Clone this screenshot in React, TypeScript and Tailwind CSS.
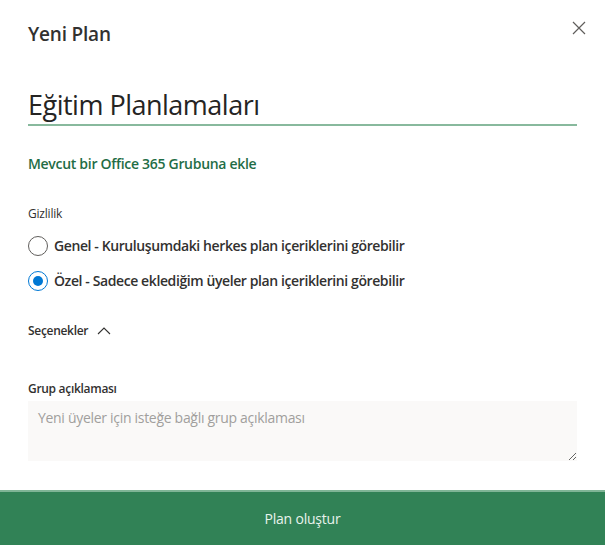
import { useState } from "react";

export default function App() {
  const [title, setTitle] = useState("Eğitim Planlamaları");
  const [privacy, setPrivacy] = useState("private");
  const [desc, setDesc] = useState("");

  return (
    <div
      className="relative flex h-[545px] w-[605px] flex-col bg-white text-[#323130]"
      style={{ fontFamily: '"Open Sans", "Noto Sans", sans-serif' }}
    >
      <div className="flex-1 px-7">
        <div className="flex items-start justify-between pt-[22px]">
          <h1 className="text-[19px] font-semibold leading-6 tracking-[-0.2px]">Yeni Plan</h1>
          <button className="mr-[-10px] mt-[-2px] text-[#605e5c]">
            <svg width="16" height="16" viewBox="0 0 16 16" fill="none" stroke="currentColor" strokeWidth="1.2">
              <path d="M2 2l12 12M14 2L2 14" />
            </svg>
          </button>
        </div>

        <input
          value={title}
          onChange={(e) => setTitle(e.target.value)}
          className="mt-[41px] w-full border-b-2 border-[#88b99d] pb-[1px] text-[27px] leading-9 tracking-[-0.5px] text-[#252423] outline-none"
        />

        <p className="mt-[27px] text-[14px] font-semibold tracking-[-0.3px] text-[#1f6d46]">
          Mevcut bir Office 365 Grubuna ekle
        </p>

        <p className="mt-[31px] text-[12px] tracking-[-0.2px] text-[#323130]">Gizlilik</p>

        <div className="mt-[12px] flex flex-col gap-[14px]">
          <Radio
            checked={privacy === "public"}
            onClick={() => setPrivacy("public")}
            label="Genel - Kuruluşumdaki herkes plan içeriklerini görebilir"
          />
          <Radio
            checked={privacy === "private"}
            onClick={() => setPrivacy("private")}
            label="Özel - Sadece eklediğim üyeler plan içeriklerini görebilir"
          />
        </div>

        <button className="mt-[31px] flex items-center gap-[9px] text-[12px] font-semibold tracking-[-0.3px]">
          Seçenekler
          <svg width="14" height="10" viewBox="0 0 14 10" fill="none" stroke="#323130" strokeWidth="1.1">
            <path d="M1 8l6-6 6 6" />
          </svg>
        </button>

        <p className="mt-[40px] text-[12px] font-semibold tracking-[-0.3px]">Grup açıklaması</p>
        <textarea
          value={desc}
          onChange={(e) => setDesc(e.target.value)}
          placeholder="Yeni üyeler için isteğe bağlı grup açıklaması"
          className="mt-[3px] block h-[60px] w-full resize-y bg-[#faf9f8] px-[10px] py-[6px] text-[14px] tracking-[-0.3px] text-[#323130] outline-none placeholder:text-[#a19f9d]"
        />
      </div>

      <button className="h-[55px] w-full border-t-2 border-[#7fb596] bg-[#318256] text-[14px] tracking-[-0.2px] text-[#e8f3ec]">
        Plan oluştur
      </button>
    </div>
  );
}

function Radio({ checked, onClick, label }: { checked: boolean; onClick: () => void; label: string }) {
  return (
    <label onClick={onClick} className="flex cursor-pointer items-center gap-[6px]">
      <span
        className={`flex h-[20px] w-[20px] items-center justify-center rounded-full border ${
          checked ? "border-[#0078d4]" : "border-[#605e5c]"
        }`}
      >
        {checked && <span className="h-[10px] w-[10px] rounded-full bg-[#0078d4]" />}
      </span>
      <span className="text-[14px] font-semibold tracking-[-0.4px] text-[#323130]">{label}</span>
    </label>
  );
}
